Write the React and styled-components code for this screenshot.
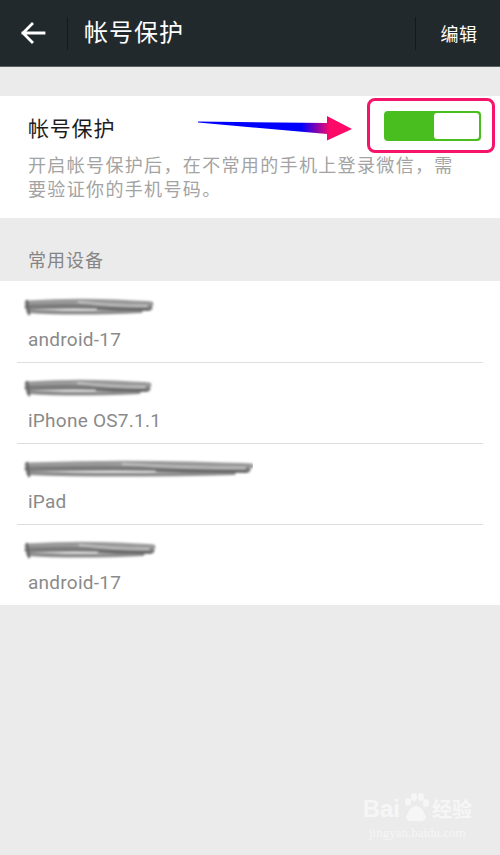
import React from "react";
import styled, { createGlobalStyle } from "styled-components";

const Global = createGlobalStyle`
  html, body { margin: 0; padding: 0; }
  body {
    background: #ebebeb;
    font-family: Roboto, "Noto Sans CJK SC", "Noto Sans", sans-serif;
  }
`;

const Page = styled.div`
  position: relative;
  width: 500px;
  height: 855px;
  background: #ebebeb;
  overflow: hidden;
`;

const Header = styled.header`
  height: 67px;
  background: #22292c;
  display: flex;
  align-items: center;
  color: #fff;
  border-bottom: 1px solid #5b6063;
  box-sizing: border-box;
`;

const BackBtn = styled.div`
  width: 67px;
  height: 100%;
  display: flex;
  align-items: center;
  justify-content: center;
  padding-right: 1px;
  box-sizing: border-box;
`;

const VDivider = styled.div`
  width: 1px;
  height: 33px;
  background: #14191b;
`;

const HeaderTitle = styled.h1`
  flex: 1;
  margin: 0 0 0 16px;
  font-size: 24px;
  font-weight: 400;
  letter-spacing: 1px;
  line-height: 1;
`;

const HeaderAction = styled.div`
  width: 84px;
  text-align: center;
  font-size: 18px;
  letter-spacing: 0.5px;
  padding-left: 2px;
  box-sizing: border-box;
`;

const Card = styled.section`
  margin-top: 29px;
  background: #fff;
  height: 122px;
  box-sizing: border-box;
  padding: 0 40px 0 28px;
  position: relative;
`;

const CardTitleRow = styled.div`
  height: 58px;
  display: flex;
  align-items: center;
  padding-top: 4px;
  box-sizing: border-box;
`;

const CardTitle = styled.div`
  font-size: 21px;
  letter-spacing: 0.8px;
  color: #1c1c1c;
`;

const Desc = styled.p`
  margin: 0;
  font-size: 18px;
  letter-spacing: 1.35px;
  line-height: 24px;
  color: #a3a3a3;
`;

const Highlight = styled.div`
  position: absolute;
  left: 367px;
  top: 2px;
  width: 128px;
  height: 55px;
  border: 3px solid #f5146a;
  border-radius: 8px;
  box-sizing: border-box;
  display: flex;
  align-items: center;
  justify-content: center;
  padding-left: 2px;
`;

const Toggle = styled.div`
  width: 97px;
  height: 30px;
  border-radius: 4px;
  background: #48bf1e;
  display: flex;
  justify-content: flex-end;
  padding: 2px;
  box-sizing: border-box;
`;

const Knob = styled.div`
  width: 45px;
  height: 100%;
  background: #fff;
  border-radius: 3px;
`;

const ArrowSvg = styled.svg`
  position: absolute;
  left: 196px;
  top: 18px;
`;

const SectionLabel = styled.div`
  height: 63px;
  box-sizing: border-box;
  padding: 31px 0 0 28px;
  font-size: 18px;
  letter-spacing: 1px;
  color: #858585;
  line-height: 24px;
`;

const List = styled.ul`
  margin: 0;
  padding: 0;
  list-style: none;
  background: #fff;
`;

const Row = styled.li`
  height: 81px;
  margin: 0 17px;
  box-sizing: border-box;
  border-top: ${(p) => (p.$first ? "none" : "1px solid #dedede")};
  padding-left: 11px;
  display: flex;
  flex-direction: column;
  justify-content: flex-start;
  padding-top: ${(p) => (p.$first ? "13px" : "12px")};
`;

const Scribble = styled.svg`
  display: block;
  margin-left: -5px;
`;

const DeviceName = styled.div`
  margin-top: 8px;
  font-size: 19px;
  letter-spacing: 0.25px;
  color: #8a8a8a;
  line-height: 24px;
`;

const Watermark = styled.div`
  position: absolute;
  right: 28px;
  bottom: 14px;
  color: #f6f6f6;
  text-align: center;
  font-family: "Liberation Sans", sans-serif;
`;

const WmTop = styled.div`
  display: flex;
  align-items: flex-end;
  font-size: 24px;
  font-weight: 700;
  gap: 2px;
`;

const WmCjk = styled.span`
  font-family: "Noto Sans CJK SC", sans-serif;
  font-size: 20px;
`;

const WmSub = styled.div`
  font-size: 13px;
  margin-top: 2px;
  font-family: "Liberation Serif", serif;
`;

function ScribbleMark({ width, id }) {
  const w = width;
  return (
    <Scribble width={w + 8} height={26} viewBox={`0 0 ${w + 8} 26`}>
      <defs>
        <filter id={`b${id}`} x="-10%" y="-50%" width="120%" height="200%">
          <feGaussianBlur stdDeviation="1.2" />
        </filter>
      </defs>
      <g filter={`url(#b${id})`} fill="none" strokeLinecap="round">
        <path d={`M4 9 Q ${w * 0.4} 6 ${w * 0.75} 8 T ${w + 2} 10`} stroke="#9a9a9a" strokeWidth="5" />
        <path d={`M4 13 Q ${w * 0.5} 11 ${w + 3} 14`} stroke="#7c7c7c" strokeWidth="5" />
        <path d={`M5 17 Q ${w * 0.4} 20 ${w * 0.95} 17`} stroke="#8c8c8c" strokeWidth="4" />
        <path d={`M${w * 0.45} 8 Q ${w * 0.7} 12 ${w} 12`} stroke="#c2c2c2" strokeWidth="2" />
        <path d={`M${w * 0.6} 15 L ${w + 2} 16`} stroke="#555" strokeWidth="1.5" />
        <path d={`M4 7 L 6 20`} stroke="#666" strokeWidth="2.5" />
      </g>
    </Scribble>
  );
}

const devices = [
  { name: "android-17", w: 124 },
  { name: "iPhone OS7.1.1", w: 122 },
  { name: "iPad", w: 222 },
  { name: "android-17", w: 126 },
];

export default function App() {
  return (
    <Page>
      <Global />
      <Header>
        <BackBtn>
          <svg width="26" height="22" viewBox="0 0 26 22">
            <path
              d="M24 11 H3 M12 2 L3 11 L12 20"
              stroke="#fff"
              strokeWidth="2.8"
              fill="none"
              strokeLinecap="square"
              strokeLinejoin="miter"
            />
          </svg>
        </BackBtn>
        <VDivider />
        <HeaderTitle>帐号保护</HeaderTitle>
        <VDivider />
        <HeaderAction>编辑</HeaderAction>
      </Header>

      <Card>
        <CardTitleRow>
          <CardTitle>帐号保护</CardTitle>
        </CardTitleRow>
        <Desc>开启帐号保护后，在不常用的手机上登录微信，需要验证你的手机号码。</Desc>
        <ArrowSvg width="160" height="30" viewBox="0 0 160 30">
          <defs>
            <linearGradient id="ag" x1="0" y1="0" x2="160" y2="0" gradientUnits="userSpaceOnUse">
              <stop offset="0" stopColor="#0000ff" />
              <stop offset="0.66" stopColor="#0000ff" />
              <stop offset="0.84" stopColor="#ff0a66" />
              <stop offset="1" stopColor="#ff0a66" />
            </linearGradient>
          </defs>
          <polygon
            points="2,3.5 131,5 131,-2 156,11 131,22.5 131,16 2,4.6"
            transform="translate(0,4)"
            fill="url(#ag)"
          />
        </ArrowSvg>
        <Highlight>
          <Toggle>
            <Knob />
          </Toggle>
        </Highlight>
      </Card>

      <SectionLabel>常用设备</SectionLabel>

      <List>
        {devices.map((d, i) => (
          <Row key={i} $first={i === 0}>
            <ScribbleMark width={d.w} id={i} />
            <DeviceName>{d.name}</DeviceName>
          </Row>
        ))}
      </List>

      <Watermark>
        <WmTop>
          <span>Bai</span>
          <svg width="28" height="30" viewBox="0 0 28 30">
            <g fill="#f6f6f6">
              <ellipse cx="6" cy="9" rx="3" ry="4" />
              <ellipse cx="12" cy="4" rx="3" ry="4" />
              <ellipse cx="19" cy="4" rx="3" ry="4" />
              <ellipse cx="24" cy="10" rx="3" ry="4" />
              <path d="M4 24 Q8 13 14 13 Q20 13 24 24 Q24 29 14 28 Q4 29 4 24 Z" />
            </g>
          </svg>
          <WmCjk>经验</WmCjk>
        </WmTop>
        <WmSub>jingyan.baidu.com</WmSub>
      </Watermark>
    </Page>
  );
}
